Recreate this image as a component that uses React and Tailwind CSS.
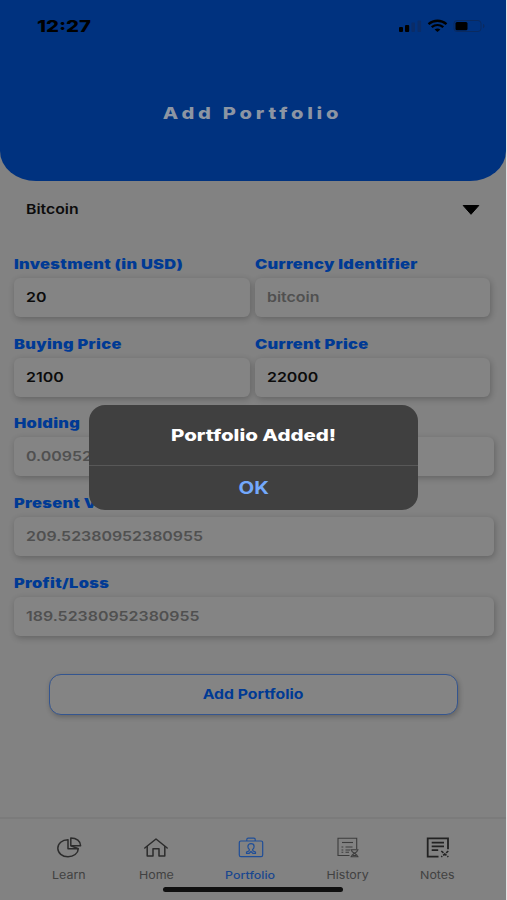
import { useState } from "react";

function Wide({ children, className }) {
  return (
    <span className={`inline-block whitespace-nowrap ${className}`}>
      {children}
    </span>
  );
}

function Field({ label, value, muted }) {
  return (
    <div className="flex flex-col flex-1">
      <div className="h-5 leading-5 text-[13px] font-black text-[#003a94]">
        <Wide className="origin-left scale-x-[1.26] tracking-[0.25px]">{label}</Wide>
      </div>
      <div
        className={`mt-[4px] h-[39px] rounded-[6px] bg-[#848484] pl-[12px] leading-[39px] text-[13.5px] font-semibold shadow-[1px_2px_6px_rgba(0,0,0,0.24)] ${
          muted ? "text-[#505050]" : "text-[#0c0c0c]"
        }`}
      >
        <Wide className="origin-left scale-x-[1.18]">{value}</Wide>
      </div>
    </div>
  );
}

function StatusIcons() {
  return (
    <svg width="88" height="16" viewBox="0 0 88 16" fill="none">
      <rect x="1" y="9" width="4" height="5" rx="1" fill="#000" />
      <rect x="7" y="7" width="4.2" height="7" rx="1" fill="#000" />
      <rect x="13.4" y="4.5" width="3.6" height="9.5" rx="1" fill="#0a2c68" />
      <rect x="19.5" y="2.5" width="3.6" height="11.5" rx="1" fill="#0a2c68" />
      <g stroke="#000" strokeWidth="2.3">
        <path d="M30.5 6.2C35.8 1.6 43.2 1.6 48.5 6.2" />
        <path d="M33.7 9.2C37.2 6.3 41.8 6.3 45.3 9.2" />
      </g>
      <path d="M36.6 11.6C38.4 10.2 40.6 10.2 42.4 11.6L39.5 14Z" fill="#000" />
      <rect x="56" y="2.5" width="27" height="11" rx="3" stroke="#0a2a60" />
      <rect x="57.5" y="4" width="12" height="8.2" rx="1.5" fill="#000" />
      <path d="M85 6V10.2C87 9.5 87 6.7 85 6Z" fill="#0a2a60" />
    </svg>
  );
}

function LearnIcon() {
  return (
    <svg width="26" height="22" viewBox="0 0 26 22" fill="none" stroke="#2c2c2c" strokeWidth="1.5" strokeLinejoin="round">
      <path d="M12 2.8C6 2.8 1.8 6.6 1.8 11.3C1.8 16 6.2 19.8 12 19.8C17.6 19.8 22.1 16.4 22.3 11.7H12Z" />
      <path d="M14.8 1V8.8H24.6C24.6 4.2 20.6 1 14.8 1Z" />
      <path d="M15 8.8L22.3 11.7" />
    </svg>
  );
}

function HomeIcon() {
  return (
    <svg width="26" height="22" viewBox="0 0 26 22" fill="none" stroke="#2c2c2c" strokeWidth="1.5" strokeLinejoin="round" strokeLinecap="round">
      <path d="M1.8 11L13 2L24.2 11" />
      <path d="M4.2 9.4V19H10V11.7H16V19H21.8V9.4" />
    </svg>
  );
}

function PortfolioIcon() {
  return (
    <svg width="26" height="22" viewBox="0 0 26 22" fill="none" stroke="#1f4e98" strokeWidth="1.2" strokeLinejoin="round">
      <rect x="1.3" y="4" width="23.4" height="15.7" rx="1.6" />
      <path d="M8.8 4V2.5C8.8 1.7 9.3 1.2 10.2 1.2H15.8C16.7 1.2 17.2 1.7 17.2 2.5V4" />
      <path d="M11.4 12.4C10.4 11.6 9.9 10.5 9.9 9.4C9.9 7.7 11.2 6.7 13 6.7C14.8 6.7 16.1 7.7 16.1 9.4C16.1 10.5 15.6 11.6 14.6 12.4L15 14L17.5 15V16.4H14.8L13 14.5L11.2 16.4H8.5V15L11 14Z" />
    </svg>
  );
}

function HistoryIcon() {
  return (
    <svg width="26" height="22" viewBox="0 0 26 22" fill="none" stroke="#3c3c3c" strokeWidth="1.1">
      <path d="M14.5 18.5H3V1.3H21.7V12" />
      <path d="M7 5.5H18" />
      <path d="M6.5 10H8.3M10.5 10H17.5M6.5 13H8.3M10.5 13H15M6.5 15.3H8.3M10.5 15.3H14" />
      <path d="M15.5 12.8H23.5M15.5 19.8H23.5M16.5 13C16.5 15 18.5 15.5 19.5 16.3C18.5 17.2 16.5 17.7 16.5 19.6M22.5 13C22.5 15 20.5 15.5 19.5 16.3C20.5 17.2 22.5 17.7 22.5 19.6M17.8 18.5H21.2" />
    </svg>
  );
}

function NotesIcon() {
  return (
    <svg width="26" height="22" viewBox="0 0 26 22" fill="none" stroke="#222" strokeWidth="1.8">
      <path d="M13.5 19.6H2.7V1.4H23V12.2" />
      <path d="M6.7 5.6H19M6.7 9.4H19M6.7 13.2H13.2" />
      <path d="M16.3 14L23.3 20M23.3 14L16.3 20" strokeWidth="1.6" strokeDasharray="2.8 1.2" />
    </svg>
  );
}

const tabs = [
  { name: "Learn", Icon: LearnIcon, width: "w-[92px]" },
  { name: "Home", Icon: HomeIcon, width: "w-[82px]" },
  { name: "Portfolio", Icon: PortfolioIcon, width: "w-[107px]" },
  { name: "History", Icon: HistoryIcon, width: "w-[87px]" },
  { name: "Notes", Icon: NotesIcon, width: "w-[93px]" },
];

function App() {
  const [active, setActive] = useState("Portfolio");
  const [showAlert, setShowAlert] = useState(true);

  return (
    <div className="relative h-[900px] w-[507px] overflow-hidden border-r border-[#e4e4e4] bg-[#828282] font-['Inter',sans-serif]">
      <div className="flex h-full flex-col">
        <header className="flex h-[181px] flex-col bg-[#00327f] [border-bottom-left-radius:36px_30px] [border-bottom-right-radius:36px_30px]">
          <div className="flex h-[52px] items-center justify-between pl-[37px] pr-[20px]">
            <Wide className="origin-left scale-x-[1.27] text-[16px] font-extrabold text-black">
              12:27
            </Wide>
            <StatusIcons />
          </div>
          <h1 className="mt-[49px] text-center text-[16.5px] leading-6 font-extrabold text-[#8c95a3]">
            <Wide className="scale-x-[1.22] tracking-[3.1px]">Add Portfolio</Wide>
          </h1>
        </header>

        <main className="flex flex-col pr-[12px] pl-[14px]">
          <div className="flex h-[56px] items-center justify-between pr-[14px] pl-[12px] text-[13.5px] font-semibold text-[#0c0c0c]">
            <Wide className="origin-left scale-x-[1.17]">Bitcoin</Wide>
            <svg width="18" height="10" viewBox="0 0 18 10" className="mt-[2px]">
              <path d="M1.2 0.5H16.8L9 9.3Z" fill="#000" stroke="#000" strokeLinejoin="round" />
            </svg>
          </div>

          <div className="mt-[17px] flex flex-col gap-[16.7px]">
            <div className="flex gap-[5px] pr-[4px]">
              <Field label="Investment (in USD)" value="20" />
              <Field label="Currency Identifier" value="bitcoin" muted />
            </div>
            <div className="flex gap-[5px] pr-[4px]">
              <Field label="Buying Price" value="2100" />
              <Field label="Current Price" value="22000" />
            </div>
            <Field label="Holding" value="0.009523809523809525" muted />
            <Field label="Present Value" value="209.52380952380955" muted />
            <Field label="Profit/Loss" value="189.52380952380955" muted />
          </div>

          <button
            type="button"
            onClick={() => setShowAlert(true)}
            className="mt-[38px] ml-[35px] h-[41px] w-[409px] rounded-[12px] border border-[#34558f] bg-[#848484] text-[13.5px] font-bold text-[#003a94] shadow-[1px_2px_5px_rgba(0,0,0,0.24)]"
          >
            <Wide className="scale-x-[1.17]">Add Portfolio</Wide>
          </button>
        </main>

        <nav className="mt-auto flex h-[83px] justify-start border-t-2 border-[#7b7b7b] pt-[18px] pl-[23px]">
          {tabs.map(({ name, Icon, width }) => (
            <button
              key={name}
              type="button"
              onClick={() => setActive(name)}
              className={`flex flex-col items-center ${width}`}
            >
              <Icon />
              <span
                className={`mt-[8px] text-[11px] leading-4 ${
                  active === name ? "font-medium text-[#1a478f]" : "text-[#414141]"
                }`}
              >
                <Wide className="scale-x-[1.13]">{name}</Wide>
              </span>
            </button>
          ))}
        </nav>
      </div>

      <div className="absolute bottom-[8px] left-[163px] h-[5px] w-[180px] rounded-full bg-[#101010]" />

      {showAlert && (
        <div className="absolute top-[405px] left-[89px] flex h-[105px] w-[329px] flex-col rounded-[16px] bg-[#404040] text-center">
          <p className="h-[60px] leading-[60px] text-[16.5px] font-extrabold text-white">
            <Wide className="scale-x-[1.24]">Portfolio Added!</Wide>
          </p>
          <button
            type="button"
            onClick={() => setShowAlert(false)}
            className="flex-1 border-t border-[#585858] pt-[2px] text-[17px] font-bold text-[#73a9fb]"
          >
            <Wide className="scale-x-[1.2]">OK</Wide>
          </button>
        </div>
      )}
    </div>
  );
}

export default App;
